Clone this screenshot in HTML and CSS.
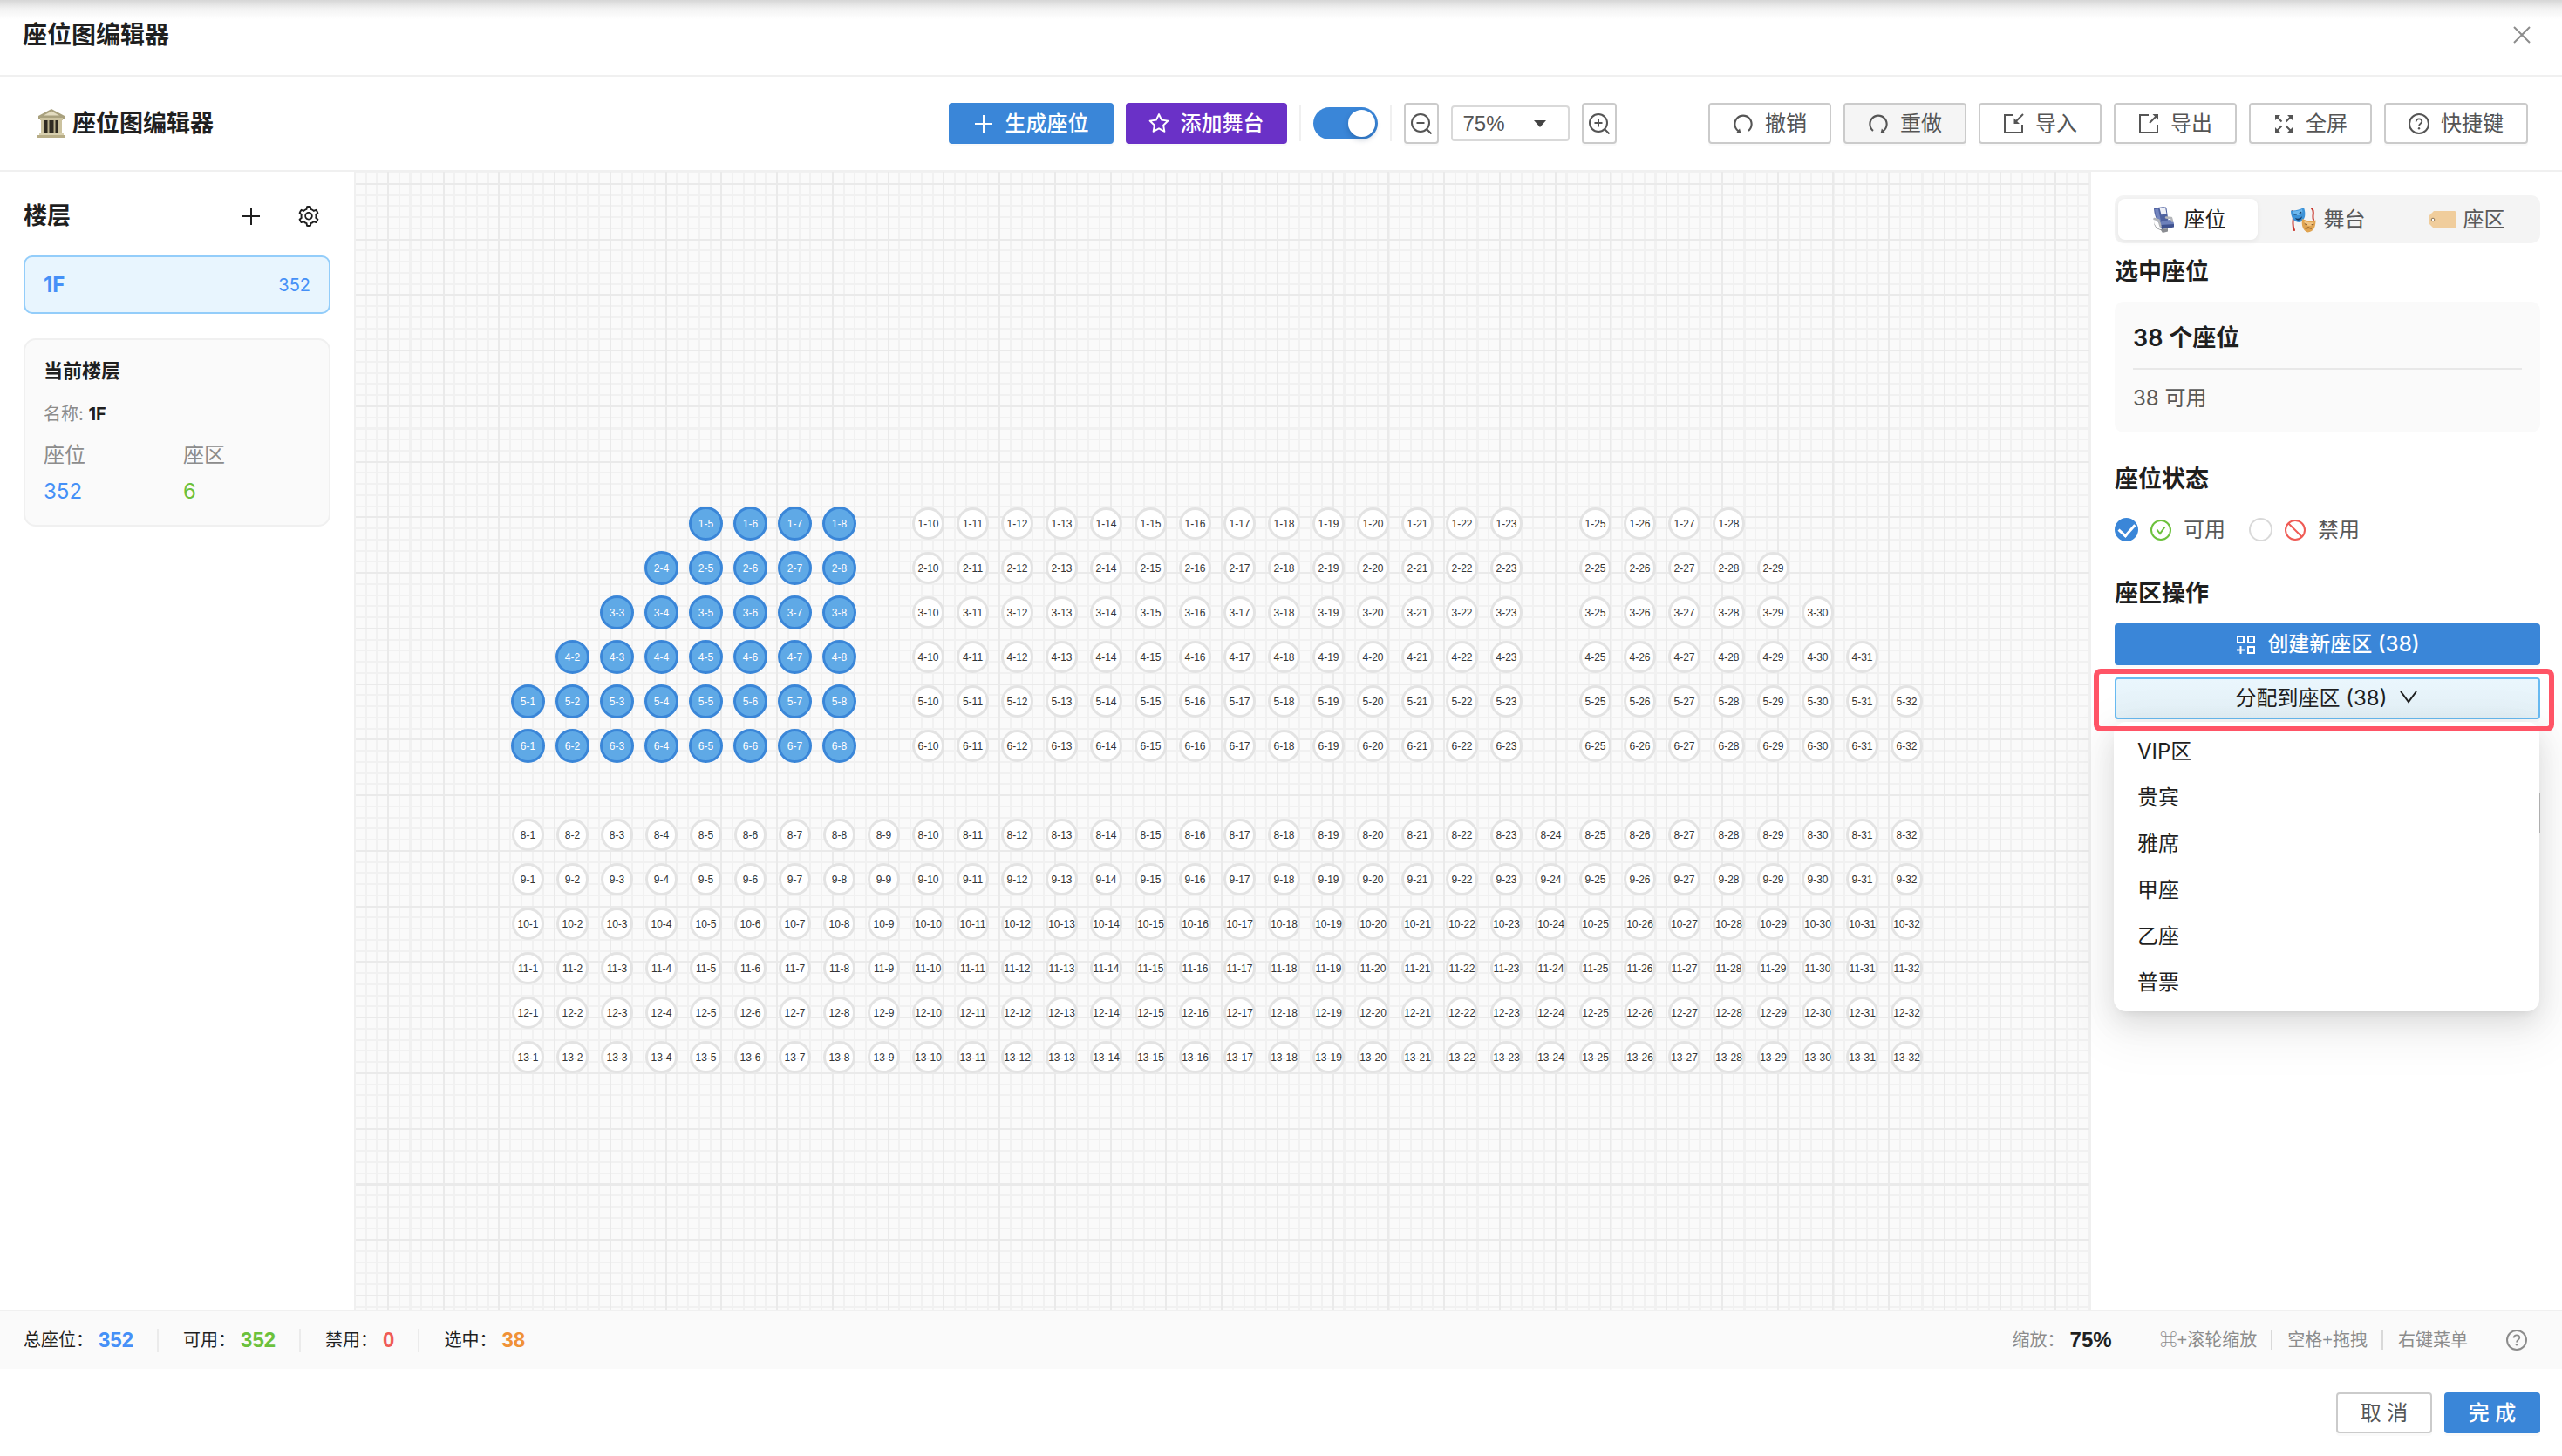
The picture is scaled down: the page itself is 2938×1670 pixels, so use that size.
FILE: index.html
```
<!DOCTYPE html>
<html lang="zh-CN">
<head>
<meta charset="utf-8">
<title>座位图编辑器</title>
<link rel="stylesheet" href="styles.css">
</head>
<body>
<svg class="sprite" aria-hidden="true">
  <symbol id="i-plus" viewBox="0 0 24 24"><path d="M12 2v20M2 12h20" fill="none" stroke="currentColor" stroke-width="2"/></symbol>
  <symbol id="i-close" viewBox="0 0 24 24"><path d="M3 3l18 18M21 3L3 21" fill="none" stroke="currentColor" stroke-width="2"/></symbol>
  <symbol id="i-star" viewBox="64 64 896 896"><path fill="currentColor" d="M908.1 353.1l-253.9-36.9L540.7 86.1c-3.1-6.3-8.2-11.4-14.5-14.5-15.8-7.8-35-1.3-42.9 14.5L369.8 316.2l-253.9 36.9c-7 1-13.4 4.3-18.3 9.3a32.05 32.05 0 00.6 45.3l183.7 179.1-43.4 252.9a31.95 31.95 0 0046.4 33.7L512 754l227.1 119.4c6.2 3.3 13.4 4.4 20.3 3.2 17.4-3 29.1-19.5 26.1-36.9l-43.4-252.9 183.7-179.1c5-4.9 8.3-11.3 9.3-18.3 2.7-17.5-9.5-33.7-27-36.3zM664.8 561.6l36.1 210.3L512 672.7 323.1 772l36.1-210.3-152.8-149L417.6 382 512 190.7 606.4 382l211.2 30.7-152.8 148.9z"/></symbol>
  <symbol id="i-undo" viewBox="64 64 896 896"><path fill="currentColor" d="M511.4 124C290.5 124.3 112 303 112 523.9c0 128 60.2 242 153.8 315.2l-37.5 48c-4.1 5.3-.3 13 6.3 12.9l167-.8c5.2 0 9-4.9 7.7-9.9L369.8 727a8 8 0 00-14.1-3L315 776.1c-10.2-8-20-16.7-29.3-26a318.64 318.64 0 01-68.6-101.7C200.4 609 192 567.1 192 523.9s8.4-85.1 25.1-124.5c16.1-38.1 39.2-72.3 68.6-101.7 29.4-29.4 63.6-52.5 101.7-68.6C426.9 212.4 468.8 204 512 204s85.1 8.4 124.5 25.1c38.1 16.1 72.3 39.2 101.7 68.6 29.4 29.4 52.5 63.6 68.6 101.7 16.7 39.4 25.1 81.3 25.1 124.5s-8.4 85.1-25.1 124.5a318.64 318.64 0 01-68.6 101.7c-7.5 7.5-15.3 14.5-23.4 21.2a7.93 7.93 0 00-1.2 11.1l39.4 50.5c2.8 3.5 7.9 4.1 11.4 1.3C854.5 760.8 912 649.1 912 523.9c0-221.1-179.4-400.2-400.6-399.9z"/></symbol>
  <symbol id="i-gear" viewBox="64 64 896 896"><path fill="currentColor" d="M924.8 625.7l-65.5-56c3.1-19 4.7-38.4 4.7-57.8s-1.6-38.8-4.7-57.8l65.5-56a32.03 32.03 0 009.3-35.2l-.9-2.6a443.74 443.74 0 00-79.7-137.9l-1.8-2.1a32.12 32.12 0 00-35.1-9.5l-81.3 28.9c-30-24.6-63.5-44-99.7-57.6l-15.7-85a32.05 32.05 0 00-25.8-25.7l-2.7-.5c-52.1-9.4-106.9-9.4-159 0l-2.7.5a32.05 32.05 0 00-25.8 25.7l-15.8 85.4a351.86 351.86 0 00-99 57.4l-81.9-29.1a32 32 0 00-35.1 9.5l-1.8 2.1a446.02 446.02 0 00-79.7 137.9l-.9 2.6c-4.5 12.5-.8 26.5 9.3 35.2l66.3 56.6c-3.1 18.8-4.6 38-4.6 57.1 0 19.2 1.5 38.4 4.6 57.1L99 625.5a32.03 32.03 0 00-9.3 35.2l.9 2.6c18.1 50.4 44.9 96.9 79.7 137.9l1.8 2.1a32.12 32.12 0 0035.1 9.5l81.9-29.1c29.8 24.5 63.1 43.9 99 57.4l15.8 85.4a32.05 32.05 0 0025.8 25.7l2.7.5a449.4 449.4 0 00159 0l2.7-.5a32.05 32.05 0 0025.8-25.7l15.7-85a350 350 0 0099.7-57.6l81.3 28.9a32 32 0 0035.1-9.5l1.8-2.1c34.8-41.1 61.6-87.5 79.7-137.9l.9-2.6c4.5-12.3.8-26.3-9.3-35zM788.3 465.9c2.5 15.1 3.8 30.6 3.8 46.1s-1.3 31-3.8 46.1l-6.6 40.1 74.7 63.9a370.03 370.03 0 01-42.6 73.6L721 702.8l-31.4 25.8c-23.9 19.6-50.5 35-79.3 45.8l-38.1 14.3-17.9 97a377.5 377.5 0 01-85 0l-17.9-97.2-37.8-14.5c-28.5-10.8-55-26.2-78.7-45.7l-31.4-25.9-93.4 33.2c-17-22.9-31.2-47.6-42.6-73.6l75.5-64.5-6.5-40c-2.4-14.9-3.7-30.3-3.7-45.5 0-15.3 1.2-30.6 3.7-45.5l6.5-40-75.5-64.5c11.3-26.1 25.6-50.7 42.6-73.6l93.4 33.2 31.4-25.9c23.7-19.5 50.2-34.9 78.7-45.7l37.9-14.3 17.9-97.2c28.1-3.2 56.8-3.2 85 0l17.9 97 38.1 14.3c28.7 10.8 55.4 26.2 79.3 45.8l31.4 25.8 92.8-32.9c17 22.9 31.2 47.6 42.6 73.6L781.8 426l6.5 39.9zM512 326c-97.2 0-176 78.8-176 176s78.8 176 176 176 176-78.8 176-176-78.8-176-176-176zm79.2 255.2A111.6 111.6 0 01512 614c-29.9 0-58-11.7-79.2-32.8A111.6 111.6 0 01400 502c0-29.9 11.7-58 32.8-79.2C454 401.6 482.1 390 512 390c29.9 0 58 11.6 79.2 32.8A111.6 111.6 0 01624 502c0 29.9-11.7 58-32.8 79.2z"/></symbol>
  <symbol id="i-zoomout" viewBox="0 0 24 24"><g fill="none" stroke="currentColor" stroke-width="2"><circle cx="11" cy="11" r="10"/><path d="M6.5 11h9M18 18l5.500 5.500"/></g></symbol>
  <symbol id="i-zoomin" viewBox="0 0 24 24"><g fill="none" stroke="currentColor" stroke-width="2"><circle cx="11" cy="11" r="10"/><path d="M6.500 11h9M11 6.500v9M18 18l5.500 5.500"/></g></symbol>
  <symbol id="i-import" viewBox="0 0 24 24"><g fill="none" stroke="currentColor" stroke-width="2"><path d="M12 2H2v20h20V13"/><path d="M23 1l-9 9"/></g><path d="M12.500 5.500V12H19z" fill="currentColor"/></symbol>
  <symbol id="i-export" viewBox="0 0 24 24"><g fill="none" stroke="currentColor" stroke-width="2"><path d="M12 2H2v20h20V13"/><path d="M13 11l8-8"/></g><path d="M16.500 1H23v6.500z" fill="currentColor"/></symbol>
  <symbol id="i-full" viewBox="0 0 24 24"><path fill="none" stroke="currentColor" stroke-width="2" d="M4 4l5.500 5.500M20 4l-5.500 5.500M4 20l5.500-5.500M20 20l-5.500-5.500"/><path fill="currentColor" d="M2 2h6L2 8zM22 2v6l-6-6zM2 22v-6l6 6zM22 22h-6l6-6z"/></symbol>
  <symbol id="i-help" viewBox="0 0 24 24"><circle cx="12" cy="12" r="11" fill="none" stroke="currentColor" stroke-width="2"/><path d="M8.700 9.500c0-1.900 1.400-3.100 3.300-3.100s3.300 1.200 3.300 2.900c0 2.400-3.300 2.500-3.300 5.200" fill="none" stroke="currentColor" stroke-width="1.800"/><circle cx="12" cy="17.300" r="1.200" fill="currentColor"/></symbol>
  <symbol id="i-ok" viewBox="0 0 24 24"><g fill="none" stroke="currentColor" stroke-width="2"><circle cx="12" cy="12" r="11"/><path d="M7.500 11.500l3.500 4.500 5.500-7.500"/></g></symbol>
  <symbol id="i-ban" viewBox="0 0 24 24"><g fill="none" stroke="currentColor" stroke-width="2"><circle cx="12" cy="12" r="11"/><path d="M4.200 4.200l15.600 15.600"/></g></symbol>
  <symbol id="i-zone" viewBox="0 0 24 24"><path fill="none" stroke="currentColor" stroke-width="2" d="M3 3h7v7H3zM15 3h7v7h-7zM15 15h7v7h-7zM6.500 14v9M2 18.500h9"/></symbol>
  <symbol id="i-down" viewBox="0 0 24 24"><path fill="none" stroke="currentColor" stroke-width="2" d="M3 4l9 12 9-12"/></symbol>
  <symbol id="i-hall" viewBox="0 0 34 34"><path fill="#a9a17e" d="M2 8L17 0l15 8v3H2z"/><path fill="#e3dcc0" d="M8 7.500l9-5 9 5z"/><path fill="#2f2b22" d="M6 12h22v16H6z"/><path fill="#cbc29f" d="M4 10h26v3H4zM5 13h4v15H5zM25 13h4v15h-4z"/><path fill="#b9b08c" d="M12.500 13h2v15h-2zM19.500 13h2v15h-2z"/><path fill="#d8d0af" d="M3 27h28v3H3z"/><path fill="#b8ae88" d="M1 30h32v3H1z"/></symbol>
  <symbol id="i-seat" viewBox="0 0 30 30">
    <path fill="#4e619f" d="M4 2.500Q4 1.500 5 1.500L16 0q2 0 2.500 2l2 14-11 3Q4.500 11 4 2.500z"/>
    <path fill="#7486bf" d="M5 3l4-.6 3 14-3 1Q5.500 10 5 3z"/>
    <path fill="#eef0f7" d="M10.500 1.500L17 .5l1.500 8-6 .8z"/>
    <path fill="#6d80ba" d="M10 18l12-3q4 0 5 4.500l-2 4-13 1z"/>
    <path fill="#3f5290" d="M12 21l15-1v3.500L13 26z"/>
    <path fill="none" stroke="#b4b6ba" stroke-width="2.500" stroke-linecap="round" stroke-linejoin="round" d="M4.500 14l5 1.500 2 7M18 12.500l6 .5 1 3.500"/>
    <path fill="#8b8d92" d="M4 17q1 7 7 9l9-1v3.500l-6 1.500-2-3Q4 25 4 17z"/>
  </symbol>
  <symbol id="i-masks" viewBox="0 0 30 30">
    <path fill="none" stroke="#c8352b" stroke-width="2" stroke-linecap="round" d="M3 5c3 8-2 14 2 22M25 2c4 4 0 8 2 13"/>
    <path fill="#3d93d8" d="M1 4.500c6 .5 10-1 15-3.500 2.500 7 2 14.500-4.500 17C4 18 1 12 1 4.500z"/>
    <path fill="#6db8ee" d="M3 5.500c4 0 8-1 11-2.500 1 4 0 6-4 7-4 0-6-2-7-4.500z"/>
    <path fill="#143a63" d="M4 9.500l3-1.500 1 1.500zM10 8l3-2.500.5 2zM6 13c3 1.500 6 .5 8-2-.500 5-6 6.500-8 2z"/>
    <path fill="#e0a451" d="M14 14c5.500 2.500 10 3 15.500 1.500 0 8-2.500 13.500-9 14C14.500 27.500 13 21 14 14z"/>
    <path fill="#f2c583" d="M16 16.500c4 1.500 8 2 11.500 1.500-1 3-3 4-5.500 4-3-.5-5-2-6-5.500z"/>
    <path fill="#5d3412" d="M16.500 19.500l3.500.5-1 1.500zM24 20.500l3.500-.5-1 1.500zM17.500 26c1-3.500 6-3.500 7.500 0-2-1.500-5-1.500-7.500 0z"/>
  </symbol>
  <symbol id="i-tag" viewBox="0 0 30 20"><path fill="#f0cd9c" d="M5 0h24a1 1 0 011 1v18a1 1 0 01-1 1H5l-5-5V5z"/><circle cx="4" cy="10" r="1.800" fill="#fff" stroke="#8d7554"/></symbol>
</svg>

<header class="modal-head">
  <h1>座位图编辑器</h1>
  <button class="bare close" type="button" aria-label="关闭"><svg class="icon"><use href="#i-close"/></svg></button>
</header>

<section class="toolbar">
  <h2><svg class="hall"><use href="#i-hall"/></svg>座位图编辑器</h2>
  <div class="tools">
    <button class="btn primary" type="button"><svg class="icon"><use href="#i-plus"/></svg>生成座位</button>
    <button class="btn purple" type="button"><svg class="icon"><use href="#i-star"/></svg>添加舞台</button>
    <span class="rule"></span>
    <input class="switch" type="checkbox" role="switch" aria-label="网格" checked>
    <span class="rule"></span>
    <button class="btn square" type="button" aria-label="缩小"><svg class="icon"><use href="#i-zoomout"/></svg></button>
    <span class="zoom">
      <select aria-label="缩放比例"><option>75%</option></select>
      <svg class="caret" viewBox="0 0 14 8"><path fill="currentColor" d="M0 0h14L7 8z"/></svg>
    </span>
    <button class="btn square" type="button" aria-label="放大"><svg class="icon"><use href="#i-zoomin"/></svg></button>
  </div>
  <div class="actions">
    <button class="btn" type="button"><svg class="icon"><use href="#i-undo"/></svg>撤销</button>
    <button class="btn off" type="button" disabled><svg class="icon flip"><use href="#i-undo"/></svg>重做</button>
    <button class="btn" type="button"><svg class="icon"><use href="#i-import"/></svg>导入</button>
    <button class="btn" type="button"><svg class="icon"><use href="#i-export"/></svg>导出</button>
    <button class="btn" type="button"><svg class="icon"><use href="#i-full"/></svg>全屏</button>
    <button class="btn" type="button"><svg class="icon"><use href="#i-help"/></svg>快捷键</button>
  </div>
</section>

<main class="work">
  <aside class="floors">
    <div class="floors-head">
      <h3>楼层</h3>
      <button class="bare" type="button" aria-label="添加楼层"><svg class="icon"><use href="#i-plus"/></svg></button>
      <button class="bare" type="button" aria-label="楼层设置"><svg class="icon"><use href="#i-gear"/></svg></button>
    </div>
    <button class="floor" type="button"><b>1F</b><span>352</span></button>
    <div class="floor-card">
      <h4>当前楼层</h4>
      <p class="name">名称: <b>1F</b></p>
      <dl>
        <div><dt>座位</dt><dd class="blue">352</dd></div>
        <div><dt>座区</dt><dd class="green">6</dd></div>
      </dl>
    </div>
  </aside>

  <div class="canvas"><div class="seats" id="seats"></div></div>

  <aside class="panel">
    <div class="tabs" role="tablist">
      <button class="tab on" role="tab" aria-selected="true" type="button"><svg class="emoji"><use href="#i-seat"/></svg>座位</button>
      <button class="tab" role="tab" type="button"><svg class="emoji"><use href="#i-masks"/></svg>舞台</button>
      <button class="tab" role="tab" type="button"><svg class="emoji"><use href="#i-tag"/></svg>座区</button>
    </div>
    <h3 class="first">选中座位</h3>
    <div class="summary">
      <strong>38 个座位</strong>
      <p>38 可用</p>
    </div>
    <h3 class="second">座位状态</h3>
    <div class="states">
      <label><input type="radio" name="state" checked><svg class="icon green"><use href="#i-ok"/></svg>可用</label>
      <label><input type="radio" name="state"><svg class="icon red"><use href="#i-ban"/></svg>禁用</label>
    </div>
    <h3 class="third">座区操作</h3>
    <button class="btn primary wide" type="button"><svg class="icon"><use href="#i-zone"/></svg>创建新座区 (38)</button>
    <div class="assign">
      <button class="btn wide open" type="button" aria-expanded="true">分配到座区 (38)<svg class="icon"><use href="#i-down"/></svg></button>
      <span class="thumb"></span>
      <ul class="menu">
        <li><button type="button">VIP区</button></li>
        <li><button type="button">贵宾</button></li>
        <li><button type="button">雅席</button></li>
        <li><button type="button">甲座</button></li>
        <li><button type="button">乙座</button></li>
        <li><button type="button">普票</button></li>
      </ul>
      <span class="highlight"></span>
    </div>
  </aside>
</main>

<section class="status">
  <div class="counts">
    <span>总座位：<b class="blue">352</b></span>
    <span>可用：<b class="green">352</b></span>
    <span>禁用：<b class="red">0</b></span>
    <span>选中：<b class="orange">38</b></span>
  </div>
  <div class="hints">
    <span class="scale">缩放：<b>75%</b></span>
    <span class="keys"><span>⌘+滚轮缩放</span><span>空格+拖拽</span><span>右键菜单</span></span>
    <button class="bare" type="button" aria-label="帮助"><svg class="icon"><use href="#i-help"/></svg></button>
  </div>
</section>

<footer class="modal-foot">
  <button class="btn end" type="button">取 消</button>
  <button class="btn primary end" type="button">完 成</button>
</footer>
<script src="seats.js"></script>
</body>
</html>
```
FILE: seats.js
```
// Seat ranges for each row: [row, [first, last], ...]
const rows = [
  [1, [5, 8], [10, 23], [25, 28]],
  [2, [4, 8], [10, 23], [25, 29]],
  [3, [3, 8], [10, 23], [25, 30]],
  [4, [2, 8], [10, 23], [25, 31]],
  [5, [1, 8], [10, 23], [25, 32]],
  [6, [1, 8], [10, 23], [25, 32]],
  [8, [1, 32]], [9, [1, 32]], [10, [1, 32]],
  [11, [1, 32]], [12, [1, 32]], [13, [1, 32]]
];
const host = document.getElementById('seats');
for (const [row, ...ranges] of rows) {
  for (const [first, last] of ranges) {
    for (let n = first; n <= last; n++) {
      const seat = document.createElement('button');
      seat.type = 'button';
      seat.className = row <= 6 && n <= 8 ? 'seat picked' : 'seat';
      seat.style.gridArea = row + ' / ' + n;
      seat.textContent = row + '-' + n;
      host.append(seat);
    }
  }
}
```
FILE: styles.css
```
:root {
  --blue: #3a86d8;
  --line: #f0f0f0;
  --pitch: 51px;
  --ui: Inter, "Noto Sans CJK SC", sans-serif;
  --plain: "Liberation Sans", "Noto Sans CJK SC", sans-serif;
}
* { box-sizing: border-box; }
body {
  margin: 0;
  min-height: 100vh;
  display: flex;
  flex-direction: column;
  background: #fff;
  color: #1f1f1f;
  font: 24px/36px var(--ui);
}
h1, h2, h3, h4, p, dl, dd, ul { margin: 0; padding: 0; }
h1 { font-size: 28px; line-height: 38px; }
h2, h3 { font-size: 27px; line-height: 38px; }
button, select { font: inherit; color: inherit; }
button { cursor: pointer; }
.sprite { position: absolute; width: 0; height: 0; }
.icon { width: 24px; height: 24px; flex: none; }
.flip { transform: scaleX(-1); }
.blue { color: #4590f7; }
.green { color: #6cc13c; }
.red { color: #ef5b55; }
.orange { color: #f09236; }
.bare { display: flex; padding: 0; border: 0; background: none; }

.modal-head {
  height: 88px;
  display: flex;
  align-items: center;
  justify-content: space-between;
  padding: 0 34px 6px 26px;
  border-bottom: 2px solid var(--line);
  background: linear-gradient(#d6d6d6, #f2f2f2 10px, #fff 22px);
}
.close { color: #8c8c8c; }

.toolbar {
  height: 109px;
  display: flex;
  align-items: center;
  justify-content: space-between;
  padding: 0 39px 0 42px;
  border-bottom: 2px solid var(--line);
}
.toolbar h2 { display: flex; align-items: center; gap: 7px; flex: 1; }
.hall { width: 34px; height: 34px; }
.tools, .actions { display: flex; align-items: center; gap: 14px; }
.actions { flex: 1; justify-content: flex-end; }
.btn {
  height: 47px;
  display: flex;
  align-items: center;
  justify-content: center;
  gap: 13px;
  padding: 0 26px;
  border: 2px solid #cbcbcb;
  border-radius: 4px;
  background: #fff;
  color: #555;
  line-height: 36px;
  white-space: nowrap;
  box-shadow: 0 3px 0 #fafafa;
}
.btn.primary { border-color: var(--blue); background: var(--blue); color: #fff; font-weight: 500; }
.btn.purple { border: 0; background: #6a31c7; color: #fff; font-weight: 500; }
.btn.off { background: #f5f5f5; }
.btn.square { width: 40px; padding: 0; }
.btn.wide { width: 100%; height: 48px; }
.btn.open { border-color: #68baf1; background: linear-gradient(#eaf6fd, #e4f1f7) padding-box; color: #1f1f1f; }
.btn.end { width: 110px; }
.rule { width: 2px; height: 41px; background: var(--line); }
.switch {
  appearance: none;
  width: 74px;
  height: 37px;
  margin: 0;
  display: flex;
  justify-content: flex-end;
  padding: 3px;
  border-radius: 19px;
  background: var(--blue);
}
.switch::after { content: ""; width: 31px; height: 31px; border-radius: 50%; background: #fff; box-shadow: 0 3px 6px rgba(0, 35, 80, .25); }
.zoom { display: grid; align-items: center; }
.zoom > * { grid-area: 1 / 1; }
.zoom select {
  appearance: none;
  width: 136px;
  height: 41px;
  padding: 0 12px;
  border: 2px solid #d9d9d9;
  border-radius: 4px;
  background: #fff;
  color: #555;
  font-family: var(--plain);
}
.caret { width: 14px; height: 8px; justify-self: end; margin-right: 27px; color: #444; pointer-events: none; }

.work { flex: 1; display: flex; align-items: stretch; }
.floors { width: 408px; flex: none; padding: 32px 27px; border-right: 2px solid var(--line); }
.floors-head { display: flex; align-items: center; gap: 42px; padding-right: 13px; }
.floors-head h3 { flex: 1; }
.floor {
  width: 100%;
  height: 67px;
  display: flex;
  align-items: center;
  justify-content: space-between;
  margin-top: 26px;
  padding: 0 21px;
  border: 2px solid #93cdfa;
  border-radius: 10px;
  background: #e8f5fe;
  color: #4590f7;
}
.floor b { font-weight: 700; }
.floor span { font-size: 20px; }
.floor-card {
  height: 216px;
  margin-top: 28px;
  padding: 19px 21px;
  border: 2px solid var(--line);
  border-radius: 14px;
  background: #fafafa;
}
.floor-card h4 { font-size: 22px; line-height: 32px; }
.name { margin-top: 19px; font-size: 20px; line-height: 30px; color: #8c8c8c; }
.name b { color: #1f1f1f; }
.floor-card dl { display: grid; grid-template-columns: 1fr 1fr; gap: 14px; margin-top: 14px; }
.floor-card dt { color: #8c8c8c; }
.floor-card dd { margin-top: 6px; }

.canvas {
  --cell: calc(var(--pitch) / 4);
  --block: calc(var(--pitch) * 5 / 4);
  flex: 1;
  padding: 378px 0 0 172px;
  background:
    repeating-linear-gradient(to right, #eaeaea 36px 38px, transparent 38px calc(36px + var(--block))),
    repeating-linear-gradient(#eaeaea 13px 15px, transparent 15px calc(13px + var(--block))),
    repeating-linear-gradient(to right, #f1f1f1 36px 38px, transparent 38px calc(36px + var(--cell))),
    repeating-linear-gradient(#f1f1f1 13px 15px, transparent 15px calc(13px + var(--cell))),
    #fafafa;
}
.seats {
  display: grid;
  grid-template-columns: repeat(32, var(--pitch));
  grid-template-rows: repeat(13, var(--pitch));
  place-items: center;
}
.seat {
  width: 37px;
  height: 37px;
  padding: 1px 0 0;
  border: 3px solid #e3e3e3;
  border-radius: 50%;
  background: #fff;
  color: #333;
  font: 12px/16px var(--plain);
  display: grid;
  place-content: center;
  white-space: nowrap;
}
.seat.picked { width: 39px; height: 39px; border-color: var(--blue); background: #5fa9e6; color: #fff; }

.panel { width: 542px; flex: none; padding: 27px 25px 27px 27px; border-left: 2px solid var(--line); }
.tabs { display: flex; padding: 4px; border-radius: 10px; background: #f4f4f4; }
.tab {
  flex: 1;
  height: 47px;
  display: flex;
  align-items: center;
  justify-content: center;
  gap: 9px;
  padding: 0;
  border: 0;
  border-radius: 8px;
  background: none;
  color: #595959;
}
.tab.on { background: #fff; color: #1f1f1f; box-shadow: 0 2px 6px rgba(0, 0, 0, .06); }
.emoji { width: 30px; height: 30px; }
.first { margin-top: 14px; }
.summary { height: 150px; margin-top: 15px; padding: 22px 21px; border-radius: 10px; background: #fafafa; }
.summary strong { display: block; height: 56px; border-bottom: 2px solid #e8e8e8; font-size: 27px; line-height: 40px; font-weight: 600; }
.summary p { margin-top: 15px; color: #595959; }
.second { margin-top: 35px; }
.states { display: flex; gap: 27px; margin-top: 25px; }
.states label { height: 27px; display: flex; align-items: center; gap: 14px; color: #595959; }
.states .icon.green { color: #6cc13c; }
.states .icon.red { color: #ef5b55; }
.states input {
  appearance: none;
  width: 27px;
  height: 27px;
  margin: 0;
  display: grid;
  place-content: center;
  border: 2px solid #d9d9d9;
  border-radius: 50%;
}
.states input:checked { border-color: var(--blue); background: var(--blue); }
.states input:checked::after {
  content: "";
  width: 9px;
  height: 15px;
  margin-bottom: 3px;
  border: solid #fff;
  border-width: 0 3px 3px 0;
  transform: rotate(42deg);
}
.third { margin-top: 41px; margin-bottom: 15px; }
.assign { position: relative; margin-top: 14px; }
.thumb { position: absolute; top: 133px; right: 0; width: 3px; height: 45px; background: #c1c1c1; }
.menu {
  position: absolute;
  top: calc(100% + 3px);
  left: -1px;
  right: 1px;
  padding: 7px;
  list-style: none;
  border-radius: 14px;
  background: #fff;
  box-shadow: 0 12px 32px rgba(0, 0, 0, .1), 0 6px 12px -8px rgba(0, 0, 0, .14), 0 18px 56px 16px rgba(0, 0, 0, .05);
}
.menu button {
  width: 100%;
  height: 53px;
  display: block;
  padding: 0 20px;
  border: 0;
  background: none;
  text-align: left;
}
.highlight { position: absolute; inset: -10px -16px -14px -24px; border: 6px solid #ff5466; border-radius: 8px; pointer-events: none; }

.status {
  height: 68px;
  display: flex;
  align-items: center;
  justify-content: space-between;
  padding: 0 40px 0 27px;
  border-top: 2px solid var(--line);
  background: #fafafa;
  font-family: var(--plain);
  font-size: 20px;
}
.status b { margin-left: 6px; font-size: 24px; }
.counts, .hints, .counts span, .scale { display: flex; align-items: center; }
.counts span + span::before { content: ""; width: 2px; height: 27px; margin: 0 28px 0 27px; background: #ebebeb; }
.hints { color: #8c8c8c; }
.scale b { color: #1f1f1f; }
.keys { display: flex; align-items: center; margin: 0 44px 0 55px; }
.keys span { display: flex; align-items: center; }
.keys span + span::before { content: ""; width: 2px; height: 22px; margin: 0 17px 0 16px; background: #d9d9d9; }
.modal-foot { height: 100px; display: flex; justify-content: flex-end; gap: 14px; padding: 27px 25px; }
```
